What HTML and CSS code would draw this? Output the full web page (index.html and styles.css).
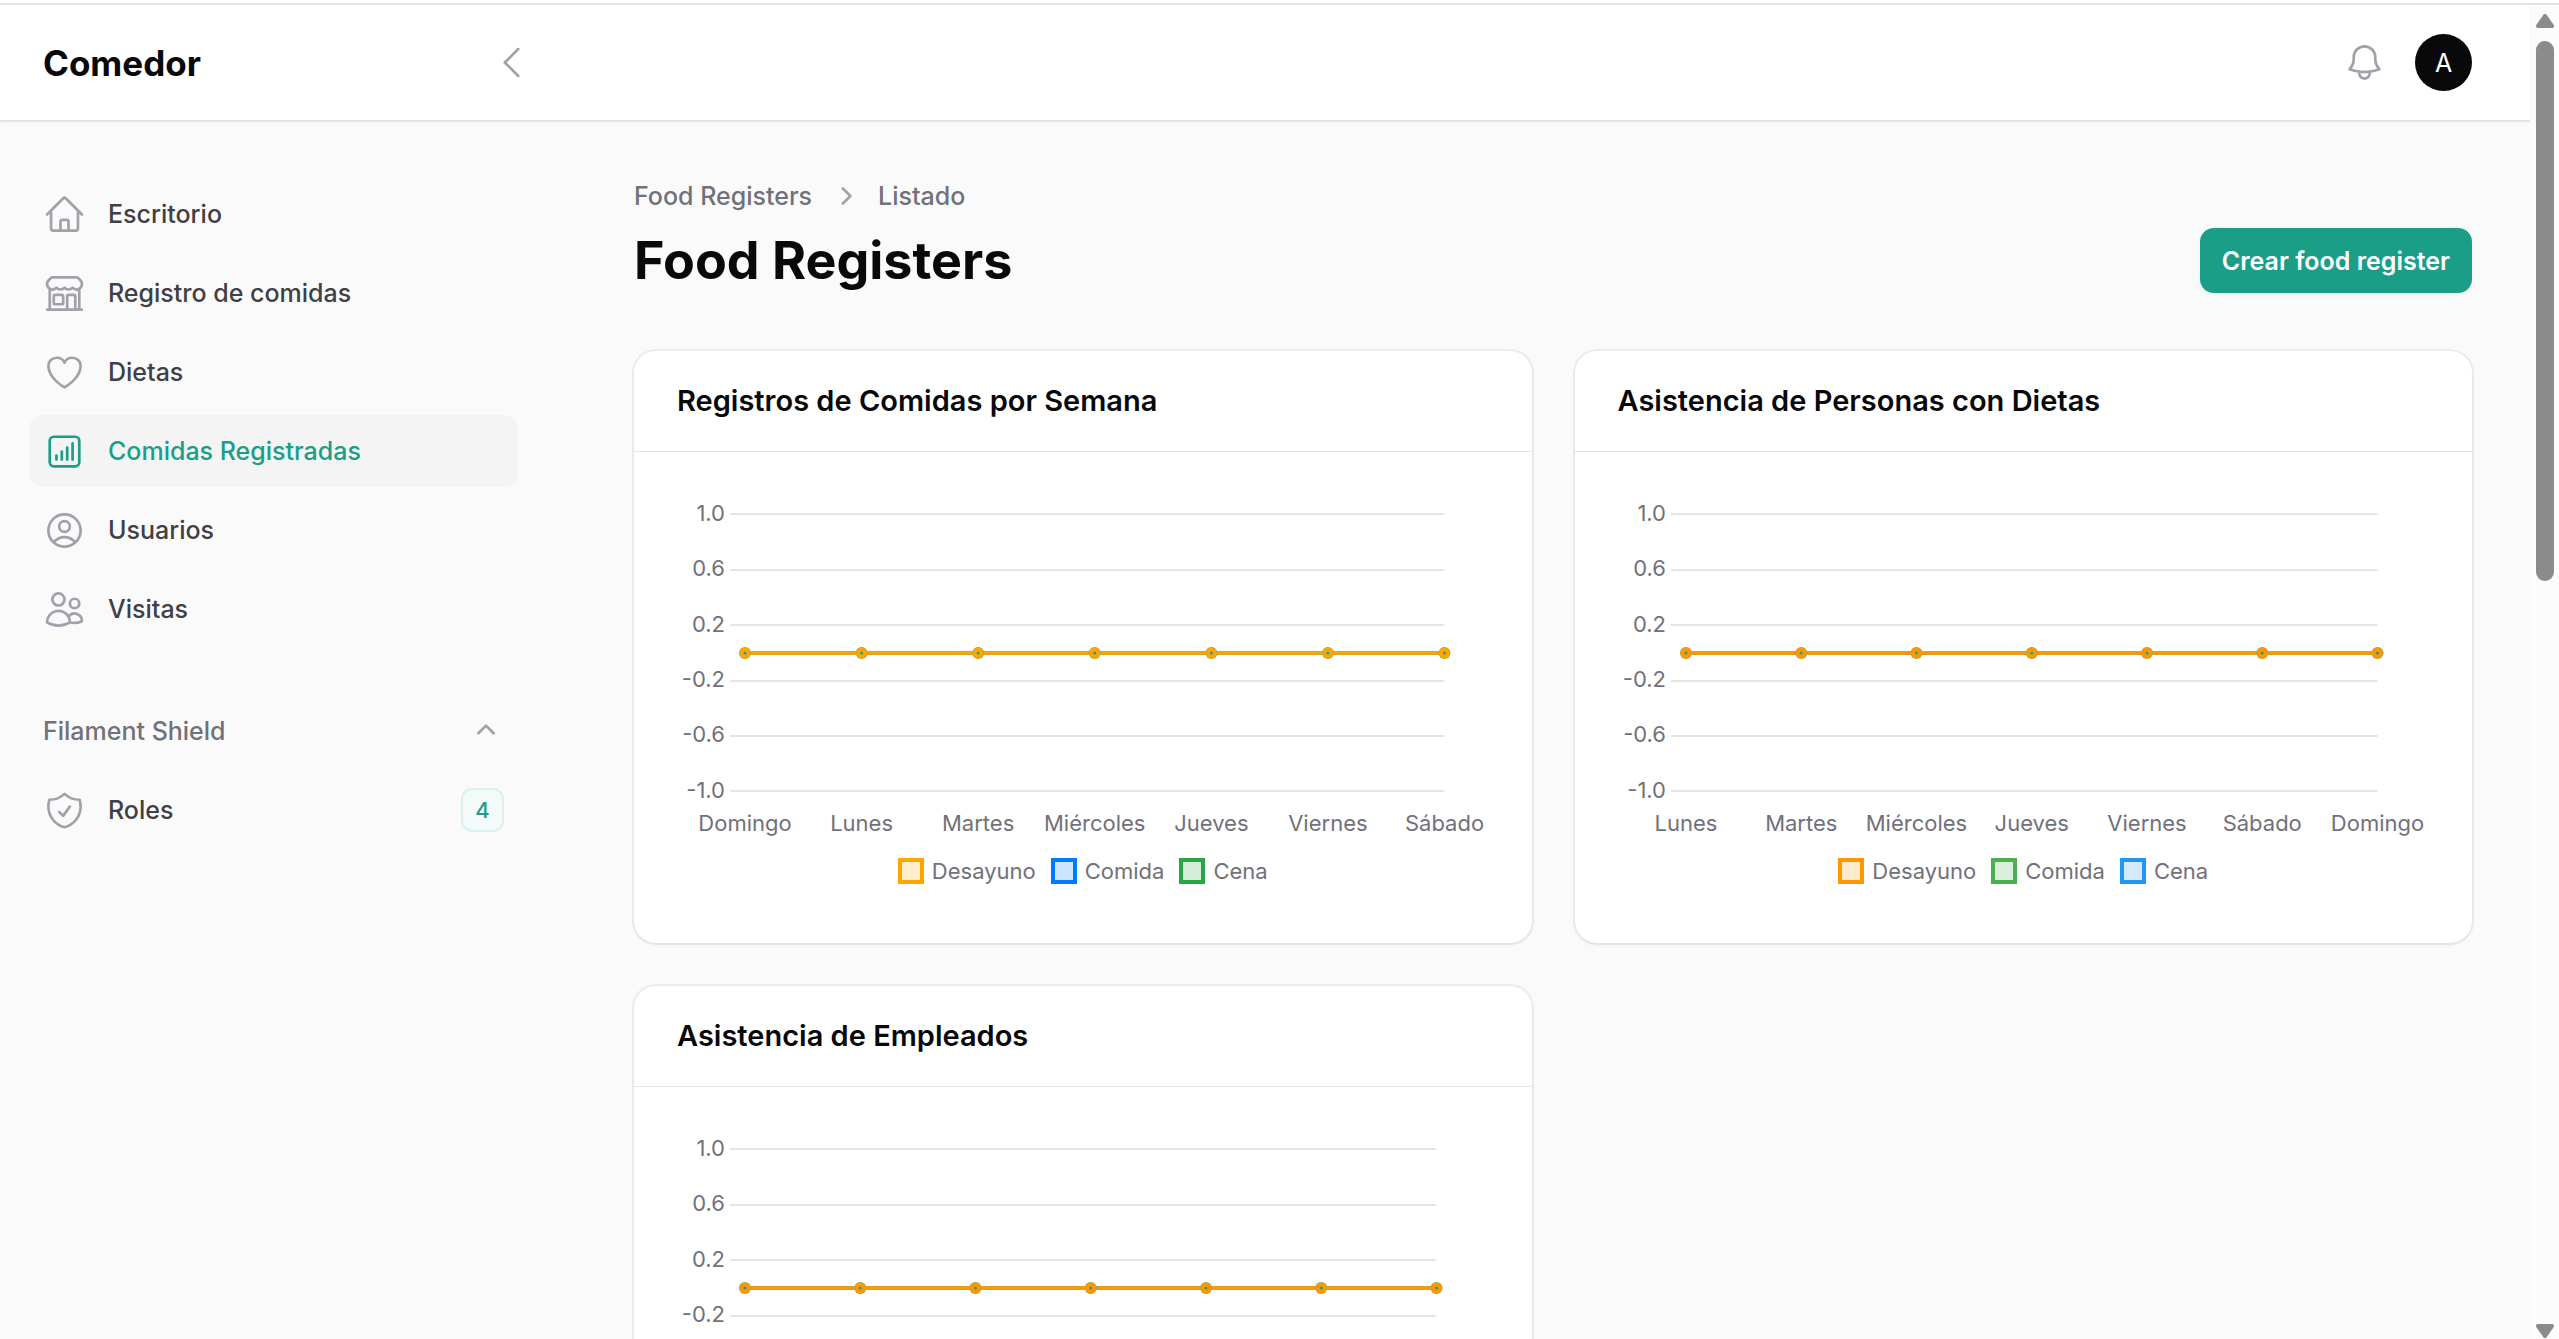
FILE: index.html
```html
<!DOCTYPE html>
<html lang="es">
<head>
<meta charset="utf-8">
<title>Food Registers - Comedor</title>
<link rel="stylesheet" href="styles.css">
</head>
<body>
<div class="window">
  <div class="app">
    <header class="topbar">
      <div class="topbar-start">
        <a class="brand" href="#">Comedor</a>
        <button class="icon-button" type="button" aria-label="Contraer barra lateral">
          <svg class="icon" viewBox="0 0 24 24"><path d="M15.75 19.5 8.25 12l7.5-7.5"/></svg>
        </button>
      </div>
      <div class="topbar-end">
        <button class="icon-button" type="button" aria-label="Notificaciones">
          <svg class="icon" viewBox="0 0 24 24"><path d="M14.857 17.082a23.848 23.848 0 0 0 5.454-1.31A8.967 8.967 0 0 1 18 9.75V9A6 6 0 0 0 6 9v.75a8.967 8.967 0 0 1-2.312 6.022c1.733.64 3.56 1.085 5.455 1.31m5.714 0a24.255 24.255 0 0 1-5.714 0m5.714 0a3 3 0 1 1-5.714 0"/></svg>
        </button>
        <button class="avatar" type="button">A</button>
      </div>
    </header>

    <div class="layout">
      <nav class="sidebar">
        <ul class="nav-list">
          <li><a class="nav-item" href="#">
            <svg class="icon" viewBox="0 0 24 24"><path d="m2.25 12 8.954-8.955c.44-.439 1.152-.439 1.591 0L21.75 12M4.5 9.75v10.125c0 .621.504 1.125 1.125 1.125H9.75v-4.875c0-.621.504-1.125 1.125-1.125h2.25c.621 0 1.125.504 1.125 1.125V21h4.125c.621 0 1.125-.504 1.125-1.125V9.75M8.25 21h8.25"/></svg>
            <span>Escritorio</span></a></li>
          <li><a class="nav-item" href="#">
            <svg class="icon" viewBox="0 0 24 24"><path d="M13.5 21v-7.5a.75.75 0 0 1 .75-.75h3a.75.75 0 0 1 .75.75V21m-4.5 0H2.36m11.14 0H18m0 0h3.64m-1.39 0V9.349M3.75 21V9.349m0 0a3.001 3.001 0 0 0 3.75-.615A2.993 2.993 0 0 0 9.75 9.75c.896 0 1.7-.393 2.25-1.016a2.993 2.993 0 0 0 2.25 1.016c.896 0 1.7-.393 2.25-1.015a3.001 3.001 0 0 0 3.75.614m-16.5 0a3.004 3.004 0 0 1-.621-4.72l1.189-1.19A1.5 1.5 0 0 1 5.378 3h13.243a1.5 1.5 0 0 1 1.06.44l1.19 1.189a3 3 0 0 1-.621 4.72M6.75 18h3.75a.75.75 0 0 0 .75-.75V13.5a.75.75 0 0 0-.75-.75H6.75a.75.75 0 0 0-.75.75v3.75c0 .414.336.75.75.75Z"/></svg>
            <span>Registro de comidas</span></a></li>
          <li><a class="nav-item" href="#">
            <svg class="icon" viewBox="0 0 24 24"><path d="M21 8.25c0-2.485-2.099-4.5-4.688-4.5-1.935 0-3.597 1.126-4.312 2.733-.715-1.607-2.377-2.733-4.313-2.733C5.1 3.75 3 5.765 3 8.25c0 7.22 9 12 9 12s9-4.78 9-12Z"/></svg>
            <span>Dietas</span></a></li>
          <li><a class="nav-item nav-item-active" href="#" aria-current="page">
            <svg class="icon" viewBox="0 0 24 24"><path d="M7.5 14.25v2.25m3-4.5v4.5m3-6.75v6.75m3-9v9M6 20.25h12A2.25 2.25 0 0 0 20.25 18V6A2.25 2.25 0 0 0 18 3.75H6A2.25 2.25 0 0 0 3.75 6v12A2.25 2.25 0 0 0 6 20.25Z"/></svg>
            <span>Comidas Registradas</span></a></li>
          <li><a class="nav-item" href="#">
            <svg class="icon" viewBox="0 0 24 24"><path d="M17.982 18.725A7.488 7.488 0 0 0 12 15.75a7.488 7.488 0 0 0-5.982 2.975m11.963 0a9 9 0 1 0-11.963 0m11.963 0A8.966 8.966 0 0 1 12 21a8.966 8.966 0 0 1-5.982-2.275M15 9.75a3 3 0 1 1-6 0 3 3 0 0 1 6 0Z"/></svg>
            <span>Usuarios</span></a></li>
          <li><a class="nav-item" href="#">
            <svg class="icon" viewBox="0 0 24 24"><path d="M15 19.128a9.38 9.38 0 0 0 2.625.372 9.337 9.337 0 0 0 4.121-.952 4.125 4.125 0 0 0-7.533-2.493M15 19.128v-.003c0-1.113-.285-2.16-.786-3.07M15 19.128v.106A12.318 12.318 0 0 1 8.624 21c-2.331 0-4.512-.645-6.374-1.766l-.001-.109a6.375 6.375 0 0 1 11.964-3.07M12 6.375a3.375 3.375 0 1 1-6.75 0 3.375 3.375 0 0 1 6.75 0Zm8.25 2.25a2.625 2.625 0 1 1-5.25 0 2.625 2.625 0 0 1 5.25 0Z"/></svg>
            <span>Visitas</span></a></li>
        </ul>
        <div class="nav-list">
          <button class="nav-group" type="button" aria-expanded="true">
            <span>Filament Shield</span>
            <svg class="icon-mini" viewBox="0 0 20 20"><path d="M9.47 6.47a.75.75 0 0 1 1.06 0l4.25 4.25a.75.75 0 1 1-1.06 1.06L10 8.06l-3.72 3.72a.75.75 0 0 1-1.06-1.06l4.25-4.25Z"/></svg>
          </button>
          <a class="nav-item" href="#">
            <svg class="icon" viewBox="0 0 24 24"><path d="M9 12.75 11.25 15 15 9.75m-3-7.036A11.959 11.959 0 0 1 3.598 6 11.99 11.99 0 0 0 3 9.749c0 5.592 3.824 10.29 9 11.623 5.176-1.332 9-6.03 9-11.622 0-1.31-.21-2.571-.598-3.751h-.152c-3.196 0-6.1-1.248-8.25-3.285Z"/></svg>
            <span>Roles</span>
            <span class="badge">4</span>
          </a>
        </div>
      </nav>

      <main class="main">
        <div class="page-header">
          <div class="page-heading">
            <nav class="breadcrumbs" aria-label="Ruta">
              <a href="#">Food Registers</a>
              <svg class="icon-mini" viewBox="0 0 20 20"><path d="M8.22 5.22a.75.75 0 0 1 1.06 0l4.25 4.25a.75.75 0 0 1 0 1.06l-4.25 4.25a.75.75 0 0 1-1.06-1.06L11.94 10 8.22 6.28a.75.75 0 0 1 0-1.06Z"/></svg>
              <a href="#">Listado</a>
            </nav>
            <h1>Food Registers</h1>
          </div>
          <button class="primary-button" type="button">Crear food register</button>
        </div>

        <div class="widgets">
          <section class="card">
            <h2>Registros de Comidas por Semana</h2>
            <div class="card-body">
              <div class="plot">
                <svg class="axis">
                  <line x1="53" x2="100%" y1="19" y2="19"/><line x1="53" x2="100%" y1="75" y2="75"/><line x1="53" x2="100%" y1="130" y2="130"/><line x1="53" x2="100%" y1="186" y2="186"/><line x1="53" x2="100%" y1="241" y2="241"/><line x1="53" x2="100%" y1="296" y2="296"/>
                  <text x="48" y="26">1.0</text><text x="48" y="81">0.6</text><text x="48" y="137">0.2</text><text x="48" y="192">-0.2</text><text x="48" y="247">-0.6</text><text x="48" y="303">-1.0</text>
                </svg>
                <svg class="series series-amber">
                  <line class="under" x1="0" x2="100%" y1="158" y2="158"/><line class="over" x1="0" x2="100%" y1="158" y2="158"/>
                  <g class="rim"><circle cx="0" cy="158" r="6"/><circle cx="16.67%" cy="158" r="6"/><circle cx="33.33%" cy="158" r="6"/><circle cx="50%" cy="158" r="6"/><circle cx="66.67%" cy="158" r="6"/><circle cx="83.33%" cy="158" r="6"/><circle cx="100%" cy="158" r="6"/></g>
                  <g class="dot"><circle cx="0" cy="158" r="3.5"/><circle cx="16.67%" cy="158" r="3.5"/><circle cx="33.33%" cy="158" r="3.5"/><circle cx="50%" cy="158" r="3.5"/><circle cx="66.67%" cy="158" r="3.5"/><circle cx="83.33%" cy="158" r="3.5"/><circle cx="100%" cy="158" r="3.5"/></g>
                  <text x="0" y="336">Domingo</text><text x="16.67%" y="336">Lunes</text><text x="33.33%" y="336">Martes</text><text x="50%" y="336">Miércoles</text><text x="66.67%" y="336">Jueves</text><text x="83.33%" y="336">Viernes</text><text x="100%" y="336">Sábado</text>
                </svg>
              </div>
              <ul class="legend">
                <li><i class="swatch swatch-amber"></i>Desayuno</li>
                <li><i class="swatch swatch-blue"></i>Comida</li>
                <li><i class="swatch swatch-green"></i>Cena</li>
              </ul>
            </div>
          </section>

          <section class="card">
            <h2>Asistencia de Personas con Dietas</h2>
            <div class="card-body">
              <div class="plot plot-wide-end">
                <svg class="axis">
                  <line x1="53" x2="100%" y1="19" y2="19"/><line x1="53" x2="100%" y1="75" y2="75"/><line x1="53" x2="100%" y1="130" y2="130"/><line x1="53" x2="100%" y1="186" y2="186"/><line x1="53" x2="100%" y1="241" y2="241"/><line x1="53" x2="100%" y1="296" y2="296"/>
                  <text x="48" y="26">1.0</text><text x="48" y="81">0.6</text><text x="48" y="137">0.2</text><text x="48" y="192">-0.2</text><text x="48" y="247">-0.6</text><text x="48" y="303">-1.0</text>
                </svg>
                <svg class="series series-orange">
                  <line class="under" x1="0" x2="100%" y1="158" y2="158"/><line class="over" x1="0" x2="100%" y1="158" y2="158"/>
                  <g class="rim"><circle cx="0" cy="158" r="6"/><circle cx="16.67%" cy="158" r="6"/><circle cx="33.33%" cy="158" r="6"/><circle cx="50%" cy="158" r="6"/><circle cx="66.67%" cy="158" r="6"/><circle cx="83.33%" cy="158" r="6"/><circle cx="100%" cy="158" r="6"/></g>
                  <g class="dot"><circle cx="0" cy="158" r="3.5"/><circle cx="16.67%" cy="158" r="3.5"/><circle cx="33.33%" cy="158" r="3.5"/><circle cx="50%" cy="158" r="3.5"/><circle cx="66.67%" cy="158" r="3.5"/><circle cx="83.33%" cy="158" r="3.5"/><circle cx="100%" cy="158" r="3.5"/></g>
                  <text x="0" y="336">Lunes</text><text x="16.67%" y="336">Martes</text><text x="33.33%" y="336">Miércoles</text><text x="50%" y="336">Jueves</text><text x="66.67%" y="336">Viernes</text><text x="83.33%" y="336">Sábado</text><text x="100%" y="336">Domingo</text>
                </svg>
              </div>
              <ul class="legend">
                <li><i class="swatch swatch-orange"></i>Desayuno</li>
                <li><i class="swatch swatch-leaf"></i>Comida</li>
                <li><i class="swatch swatch-sky"></i>Cena</li>
              </ul>
            </div>
          </section>

          <section class="card">
            <h2>Asistencia de Empleados</h2>
            <div class="card-body">
              <div class="plot plot-wide-end">
                <svg class="axis">
                  <line x1="53" x2="100%" y1="19" y2="19"/><line x1="53" x2="100%" y1="75" y2="75"/><line x1="53" x2="100%" y1="130" y2="130"/><line x1="53" x2="100%" y1="186" y2="186"/>
                  <text x="48" y="26">1.0</text><text x="48" y="81">0.6</text><text x="48" y="137">0.2</text><text x="48" y="192">-0.2</text>
                </svg>
                <svg class="series series-orange">
                  <line class="under" x1="0" x2="100%" y1="158" y2="158"/><line class="over" x1="0" x2="100%" y1="158" y2="158"/>
                  <g class="rim"><circle cx="0" cy="158" r="6"/><circle cx="16.67%" cy="158" r="6"/><circle cx="33.33%" cy="158" r="6"/><circle cx="50%" cy="158" r="6"/><circle cx="66.67%" cy="158" r="6"/><circle cx="83.33%" cy="158" r="6"/><circle cx="100%" cy="158" r="6"/></g>
                  <g class="dot"><circle cx="0" cy="158" r="3.5"/><circle cx="16.67%" cy="158" r="3.5"/><circle cx="33.33%" cy="158" r="3.5"/><circle cx="50%" cy="158" r="3.5"/><circle cx="66.67%" cy="158" r="3.5"/><circle cx="83.33%" cy="158" r="3.5"/><circle cx="100%" cy="158" r="3.5"/></g>
                </svg>
              </div>
            </div>
          </section>
        </div>
      </main>
    </div>
  </div>

  <div class="scrollbar" aria-hidden="true">
    <svg class="scroll-arrow" viewBox="0 0 18 14"><path d="M9 2 16 12H2Z"/></svg>
    <div class="scroll-track"><div class="scroll-thumb"></div></div>
    <svg class="scroll-arrow" viewBox="0 0 18 14"><path d="M9 12 2 2h14Z"/></svg>
  </div>
</div>
</body>
</html>
```

FILE: styles.css
```css
* { box-sizing: border-box; }

body {
  margin: 0;
  background: #fff;
  color: #09090b;
  font-family: Inter, "Liberation Sans", sans-serif;
  font-size: 25px;
  line-height: 36px;
}

button { padding: 0; border: 0; background: none; font: inherit; color: inherit; }
a { color: inherit; text-decoration: none; }
ul { margin: 0; padding: 0; list-style: none; }
h1, h2 { margin: 0; }

.window {
  display: grid;
  grid-template-columns: minmax(0, 1fr) 29px;
  height: 100vh;
  padding-top: 3px;
  overflow: hidden;
}

.app {
  display: flex;
  flex-direction: column;
  min-height: 0;
  border-top: 2px solid #e1e1e8;
  background: #fafafa;
}

.icon {
  flex: none;
  display: block;
  width: 43px;
  height: 43px;
  fill: none;
  stroke: #a1a1aa;
  stroke-width: 1.5;
  stroke-linecap: round;
  stroke-linejoin: round;
}

.icon-mini { flex: none; width: 36px; height: 36px; fill: #a1a1aa; }

/* Top bar */
.topbar {
  position: relative;
  flex: none;
  display: flex;
  align-items: center;
  justify-content: space-between;
  height: 115px;
  padding-right: 58px;
  background: #fff;
  box-shadow: 0 2px 0 rgba(9, 9, 11, .05), 0 2px 2px rgba(0, 0, 0, .05);
}

.topbar-start {
  display: flex;
  align-items: center;
  justify-content: space-between;
  width: 576px;
  padding: 0 43px;
}

.topbar-end { display: flex; align-items: center; gap: 29px; }
.brand { font-size: 35px; font-weight: 700; }

.avatar {
  width: 57px;
  height: 57px;
  border-radius: 50%;
  background: #09090b;
  color: #fff;
}

/* Sidebar */
.layout { flex: 1; display: flex; min-height: 0; overflow: hidden; }

.sidebar {
  flex: none;
  display: flex;
  flex-direction: column;
  gap: 50px;
  width: 576px;
  padding: 58px 58px 58px 29px;
  font-weight: 500;
}

.nav-list { display: flex; flex-direction: column; gap: 7px; }

.nav-item, .nav-group {
  display: flex;
  align-items: center;
  gap: 22px;
  width: 100%;
  height: 72px;
  padding: 0 14px;
  border-radius: 14px;
  color: #3f3f46;
}

.nav-item-active { background: #f4f4f5; color: #1a9e88; }
.nav-item-active .icon { stroke: #1a9e88; }
.nav-group { justify-content: space-between; color: #71717a; }

.badge {
  min-width: 43px;
  margin-left: auto;
  border: 2px solid #dcf0ed;
  border-radius: 11px;
  background: #f3fbfa;
  color: #1a9e88;
  font-size: 22px;
  line-height: 40px;
  text-align: center;
}

/* Page */
.main { flex: 1; min-width: 0; padding: 58px; }

.page-header {
  display: flex;
  align-items: flex-end;
  justify-content: space-between;
  margin-bottom: 58px;
}

.page-heading { display: flex; flex-direction: column; gap: 14px; }

.breadcrumbs {
  display: flex;
  align-items: center;
  gap: 15px;
  color: #71717a;
  font-weight: 500;
}

h1 { font-size: 52px; line-height: 65px; font-weight: 700; }

.primary-button {
  height: 65px;
  padding: 0 22px;
  border-radius: 14px;
  background: #1a9e88;
  box-shadow: 0 2px 4px rgba(0, 0, 0, .05);
  color: #fff;
  font-weight: 600;
}

.widgets { display: grid; grid-template-columns: 1fr 1fr; gap: 43px; }

.card {
  min-width: 0;
  border-radius: 22px;
  background: #fff;
  box-shadow: 0 0 0 2px rgba(9, 9, 11, .05), 0 2px 4px rgba(0, 0, 0, .05);
}

h2 {
  padding: 28px 43px;
  border-bottom: 1px solid #e4e4e7;
  font-size: 29px;
  line-height: 44px;
  font-weight: 600;
}

.card-body {
  padding: 43px 43px 59px;
  color: #71717a;
  font-size: 22px;
}

/* Charts */
.plot { display: grid; margin-right: 44px; }
.plot-wide-end { margin-right: 52px; }
.plot svg { grid-area: 1 / 1; width: 100%; height: 363px; overflow: visible; }
.plot text { fill: #71717a; font-size: 22px; }

.axis line { stroke: #e5e5e5; stroke-width: 2; }
.axis text { text-anchor: end; }

.plot .series { width: calc(100% - 68px); margin-left: 68px; }
.series text { text-anchor: middle; }
.series-amber { --line: #ffa500; --shade: #b3a43c; }
.series-orange { --line: #ff9800; --shade: #c8a03c; }
.series .under { stroke: var(--shade); stroke-width: 4; }
.series .over { stroke: var(--line); stroke-width: 3; }
.rim { fill: #8ea650; }
.dot { fill: #1aa58f; stroke: var(--line); stroke-width: 4; }

.legend { display: flex; justify-content: center; gap: 15px; line-height: 26px; }
.legend li { display: flex; align-items: center; gap: 8px; }
.swatch { width: 26px; height: 26px; border: 4px solid; }
.swatch-amber { border-color: #ffa500; background: #ffedcc; }
.swatch-blue { border-color: #007bff; background: #cce5ff; }
.swatch-green { border-color: #28a745; background: #d4edda; }
.swatch-orange { border-color: #ff9800; background: #ffeacc; }
.swatch-leaf { border-color: #4caf50; background: #dbefdc; }
.swatch-sky { border-color: #2196f3; background: #d3eafd; }

/* Scrollbar */
.scrollbar {
  display: flex;
  flex-direction: column;
  align-items: center;
  gap: 13px;
  padding: 9px 5px 1px 6px;
  border-top: 2px solid #e1e1e8;
  background: #fcfcfc;
}

.scroll-arrow {
  flex: none;
  width: 18px;
  height: 14px;
  fill: #8b8b8b;
  stroke: #8b8b8b;
  stroke-width: 4;
  stroke-linejoin: round;
}

.scroll-track { flex: 1; width: 18px; }
.scroll-thumb { height: 42.5%; border-radius: 9px; background: #8b8b8b; }
```
